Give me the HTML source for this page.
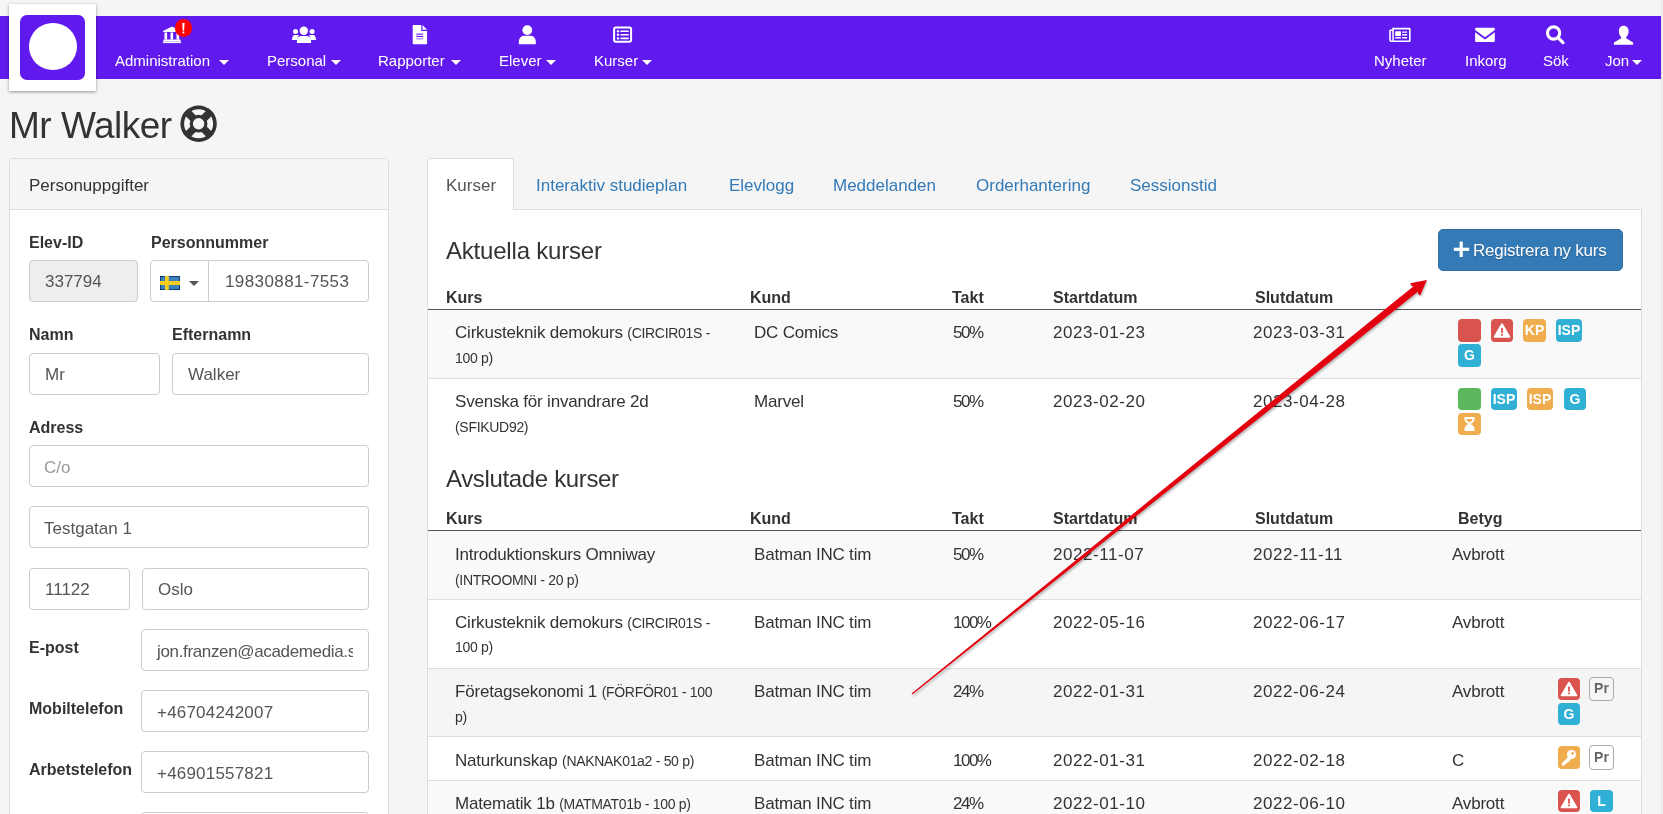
<!DOCTYPE html>
<html><head><meta charset="utf-8">
<style>
html,body{margin:0;padding:0;}
body{width:1663px;height:814px;overflow:hidden;position:relative;background:#f5f5f5;font-family:"Liberation Sans",sans-serif;color:#333;}
.a{position:absolute;}
.t{position:absolute;white-space:nowrap;line-height:1;}
.nl{color:#fff;font-size:15px;top:53px;}
.car{position:absolute;width:0;height:0;border-left:5px solid transparent;border-right:5px solid transparent;border-top:5px solid #fff;top:60px;}
.inp{position:absolute;box-sizing:border-box;height:42px;border:1px solid #ccc;border-radius:4px;background:#fff;}
.lbl{font-weight:bold;font-size:16px;color:#333;}
.it{font-size:17px;color:#555;}
.tab{font-size:17px;color:#337ab7;top:177px;}
.th{font-weight:bold;font-size:16px;color:#333;}
.td{font-size:17px;color:#333;letter-spacing:-0.2px;}
.sm{font-size:14px;letter-spacing:-0.3px;}
.dt{letter-spacing:.55px;}
.pc{letter-spacing:-1.5px;}
.row{position:absolute;left:428px;width:1213px;border-bottom:1px solid #ddd;box-sizing:border-box;}
.st{background:#f9f9f9;}
.bd{position:absolute;height:23px;border-radius:4px;color:#fff;font-weight:bold;font-size:14px;line-height:23px;text-align:center;box-sizing:border-box;}
.r{background:#d9534f;}
.o{background:#f0ad4e;}
.b{background:#31b0d5;}
.g{background:#5cb85c;}
.pr{background:transparent;border:1px solid #aaa;color:#666;line-height:21px;}
</style></head><body><div id="root" style="position:absolute;left:0;top:0;width:1663px;height:814px;will-change:transform;">

<!-- NAVBAR -->
<div class="a" style="left:0;top:16px;width:1661px;height:63px;background:#611aed;"></div>
<div class="a" style="left:1661px;top:0;width:1px;height:814px;background:#e6e6e6;"></div>
<div class="a" style="left:9px;top:4px;width:87px;height:87px;background:#fff;box-shadow:0 1px 3px rgba(0,0,0,.4);"></div>
<div class="a" style="left:20.3px;top:14.5px;width:64.7px;height:65.3px;border-radius:7px;background:#611aed;"></div>
<div class="a" style="left:29px;top:23.3px;width:47.7px;height:46.6px;border-radius:50%;background:#fff;"></div>

<div class="t nl" style="left:115px;">Administration</div><div class="car" style="left:219px;"></div>
<div class="t nl" style="left:267px;">Personal</div><div class="car" style="left:331px;"></div>
<div class="t nl" style="left:378px;">Rapporter</div><div class="car" style="left:451px;"></div>
<div class="t nl" style="left:499px;">Elever</div><div class="car" style="left:546px;"></div>
<div class="t nl" style="left:594px;">Kurser</div><div class="car" style="left:642px;"></div>
<div class="t nl" style="left:1374px;">Nyheter</div>
<div class="t nl" style="left:1465px;">Inkorg</div>
<div class="t nl" style="left:1543px;">Sök</div>
<div class="t nl" style="left:1605px;">Jon</div><div class="car" style="left:1632px;"></div>

<!-- nav icons -->
<svg class="a" style="left:0;top:0" width="1663" height="90" viewBox="0 0 1663 90">
 <g fill="#fff">
  <!-- building -->
  <path d="M163 31 L172 26.6 L181 31 L181 32 L163 32 Z"/>
  <rect x="164.5" y="32.5" width="2.6" height="7"/><rect x="170.5" y="32.5" width="2.6" height="7"/><rect x="176.5" y="32.5" width="2.6" height="7"/>
  <rect x="163.5" y="39.5" width="17" height="1.6"/><rect x="163" y="41.3" width="18" height="1.8"/>
  <!-- people -->
  <circle cx="295.5" cy="31.4" r="2.5"/><circle cx="303.8" cy="30.7" r="4.2"/><circle cx="312.1" cy="31.4" r="2.5"/>
  <path d="M297 43 L311 43 C311.5 39 310 36 307 36 L301 36 C298 36 296.5 39 297 43 Z"/>
  <path d="M292 40 L297.5 40 C297.5 37.5 298 36.5 299 35 L295 35 C293 35 292 37 292 40 Z"/>
  <path d="M316 40 L310.5 40 C310.5 37.5 310 36.5 309 35 L313 35 C315 35 316 37 316 40 Z"/>
  <!-- file -->
  <path d="M413.5 25 L421.3 25 L421.3 31 L427.1 31 L427.1 43.3 Q427.1 44.3 426.1 44.3 L413.7 44.3 Q412.7 44.3 412.7 43.3 L412.7 26 Q412.7 25 413.5 25 Z"/>
  <path d="M422.5 25 L427.1 29.7 L422.5 29.7 Z"/>
  <!-- user -->
  <circle cx="527.3" cy="30.1" r="4.9"/>
  <path d="M518.8 44.3 L535.8 44.3 L535.8 42 C535.8 38.5 533.5 35.8 530.5 35.8 L524.2 35.8 C521 35.8 518.8 38.5 518.8 42 Z"/>
  <!-- newspaper -->
  <path fill-rule="evenodd" d="M1392.2 27.8 L1409.6 27.8 Q1410.6 27.8 1410.6 28.8 L1410.6 41 Q1410.6 42 1409.6 42 L1391 42 Q1389.2 42 1389.2 40.2 L1389.2 30.5 Q1389.2 29.5 1390.2 29.5 L1392.2 29.5 Z M1393.8 29.5 L1393.8 40.4 L1409 40.4 L1409 29.5 Z M1390.8 31 L1390.8 40 Q1390.8 40.4 1391.2 40.4 L1392.3 40.4 L1392.3 31 Z"/>
  <rect x="1395.2" y="31.3" width="5.8" height="4.7" rx=".6"/>
  <rect x="1402" y="31.4" width="5.2" height="1.4" rx=".5"/><rect x="1402" y="34.1" width="5.2" height="1.4" rx=".5"/>
  <rect x="1395.2" y="37" width="5.8" height="1.4" rx=".5"/><rect x="1402" y="37" width="5.2" height="1.4" rx=".5"/>
  <!-- envelope -->
  <path d="M1476.2 27.8 L1493.8 27.8 Q1494.8 27.8 1494.8 28.8 L1494.8 30 L1485 37.2 L1475.1 30 L1475.1 28.8 Q1475.1 27.8 1476.2 27.8 Z"/>
  <path d="M1475.1 32.2 L1485 39.4 L1494.8 32.2 L1494.8 41 Q1494.8 42.1 1493.8 42.1 L1476.1 42.1 Q1475.1 42.1 1475.1 41 Z"/>
  <!-- user2 -->
  <path d="M1623.7 25.8 C1626.6 25.8 1628.6 28 1628.6 31.2 C1628.6 34 1627.6 36 1626.2 37 L1626.2 38.3 L1633.1 42.5 L1633.1 44.8 L1613.9 44.8 L1613.9 42.5 L1621.2 38.3 L1621.2 37 C1619.8 36 1618.9 34 1618.9 31.2 C1618.9 28 1620.8 25.8 1623.7 25.8 Z"/>
 </g>
 <g fill="none" stroke="#fff">
  <!-- list -->
  <rect x="614.1" y="27.6" width="17" height="14.2" rx="1.8" stroke-width="2"/>
  <!-- search -->
  <circle cx="1553.6" cy="33" r="6.1" stroke-width="3.1"/>
  <path d="M1558 37.6 L1563 42.6" stroke-width="3.2" stroke-linecap="round"/>
 </g>
 <g fill="#fff">
  <circle cx="618" cy="31.3" r="1.2"/><circle cx="618" cy="34.8" r="1.2"/><circle cx="618" cy="38.4" r="1.2"/>
  <rect x="620.3" y="30.5" width="8.6" height="1.6" rx=".8"/><rect x="620.3" y="34" width="8.6" height="1.6" rx=".8"/><rect x="620.3" y="37.6" width="8.6" height="1.6" rx=".8"/>
 </g>
 <!-- file lines -->
 <g fill="#611aed"><rect x="416.3" y="33.6" width="6.8" height="1.1"/><rect x="416.3" y="35.9" width="6.8" height="1.1"/><rect x="416.3" y="38.2" width="6.8" height="1.1" opacity=".6"/></g>
 <!-- badge -->
 <rect x="175" y="19" width="17" height="18" rx="8.5" fill="#f00"/>
 <path d="M182.2 23 L184.6 23 L184.1 30.8 L182.7 30.8 Z" fill="#fff"/><rect x="182.5" y="31.6" width="1.8" height="1.8" fill="#fff"/>
</svg>

<!-- TITLE -->
<div class="t" style="left:9px;top:107px;font-size:37px;letter-spacing:-0.5px;color:#333;">Mr Walker</div>
<svg class="a" style="left:178px;top:103px" width="42" height="42" viewBox="0 0 42 42">
 <circle cx="20.6" cy="20.7" r="18.2" fill="#333"/>
 <circle cx="20.6" cy="20.7" r="11.7" fill="none" stroke="#f5f5f5" stroke-width="5.6"/>
 <g stroke="#333" stroke-width="7.5"><line x1="8" y1="8" x2="33.2" y2="33.4"/><line x1="33.2" y1="8" x2="8" y2="33.4"/></g>
 <circle cx="20.6" cy="20.7" r="5.7" fill="#f5f5f5"/>
</svg>

<!-- LEFT PANEL -->
<div class="a" style="left:9px;top:158px;width:380px;height:700px;box-sizing:border-box;border:1px solid #ddd;border-radius:4px;background:#fff;"></div>
<div class="a" style="left:10px;top:159px;width:378px;height:50px;border-bottom:1px solid #ddd;background:#f5f5f5;border-radius:3px 3px 0 0;"></div>
<div class="t" style="left:29px;top:177px;font-size:17px;color:#333;">Personuppgifter</div>

<div class="t lbl" style="left:29px;top:235px;">Elev-ID</div>
<div class="t lbl" style="left:151px;top:235px;">Personnummer</div>
<div class="inp" style="left:29px;top:260px;width:109px;background:#eee;"></div>
<div class="t it" style="left:45px;top:273px;">337794</div>
<div class="inp" style="left:150px;top:260px;width:219px;"></div>
<div class="a" style="left:208px;top:260px;width:1px;height:42px;background:#ccc;"></div>
<svg class="a" style="left:160px;top:276px" width="20" height="14" viewBox="0 0 20 14">
 <rect width="20" height="14" fill="#0a2a6a"/><rect x=".8" y=".8" width="18.4" height="12.4" fill="#3b82b8"/>
 <rect x="5" y="0" width="3.8" height="14" fill="#f7cc1c"/><rect x="0" y="5" width="20" height="4" fill="#f7cc1c"/>
</svg>
<div class="a" style="left:189px;top:281px;width:0;height:0;border-left:5px solid transparent;border-right:5px solid transparent;border-top:5px solid #555;"></div>
<div class="t it" style="left:225px;top:273px;letter-spacing:.4px;">19830881-7553</div>

<div class="t lbl" style="left:29px;top:327px;">Namn</div>
<div class="t lbl" style="left:172px;top:327px;">Efternamn</div>
<div class="inp" style="left:29px;top:353px;width:131px;"></div>
<div class="t it" style="left:45px;top:366px;">Mr</div>
<div class="inp" style="left:172px;top:353px;width:197px;"></div>
<div class="t it" style="left:188px;top:366px;">Walker</div>

<div class="t lbl" style="left:29px;top:420px;">Adress</div>
<div class="inp" style="left:29px;top:445px;width:340px;"></div>
<div class="t it" style="left:44px;top:459px;color:#999;">C/o</div>
<div class="inp" style="left:29px;top:506px;width:340px;"></div>
<div class="t it" style="left:44px;top:520px;">Testgatan 1</div>
<div class="inp" style="left:29px;top:568px;width:101px;"></div>
<div class="t it" style="left:45px;top:581px;">11122</div>
<div class="inp" style="left:142px;top:568px;width:227px;"></div>
<div class="t it" style="left:158px;top:581px;">Oslo</div>

<div class="t lbl" style="left:29px;top:640px;">E-post</div>
<div class="inp" style="left:141px;top:629px;width:228px;"></div><div class="a" style="left:142px;top:630px;width:211px;height:40px;overflow:hidden;"><div class="t it" style="left:15px;top:13px;letter-spacing:-0.35px;">jon.franzen@academedia.se</div></div>
<div class="t lbl" style="left:29px;top:701px;">Mobiltelefon</div>
<div class="inp" style="left:141px;top:690px;width:228px;"></div>
<div class="t it" style="left:157px;top:704px;letter-spacing:.2px;">+46704242007</div>
<div class="t lbl" style="left:29px;top:762px;">Arbetstelefon</div>
<div class="inp" style="left:141px;top:751px;width:228px;"></div>
<div class="t it" style="left:157px;top:765px;letter-spacing:.2px;">+46901557821</div>
<div class="inp" style="left:141px;top:812px;width:228px;"></div>

<!-- TABS -->
<div class="a" style="left:427px;top:209px;width:1215px;height:700px;box-sizing:border-box;border:1px solid #ddd;background:#fff;"></div>
<div class="a" style="left:427px;top:158px;width:87px;height:52px;box-sizing:border-box;border:1px solid #ddd;border-bottom:none;border-radius:4px 4px 0 0;background:#fff;"></div>
<div class="t tab" style="left:446px;color:#555;">Kurser</div>
<div class="t tab" style="left:536px;">Interaktiv studieplan</div>
<div class="t tab" style="left:729px;">Elevlogg</div>
<div class="t tab" style="left:833px;">Meddelanden</div>
<div class="t tab" style="left:976px;">Orderhantering</div>
<div class="t tab" style="left:1130px;">Sessionstid</div>

<div class="t" style="left:446px;top:239px;font-size:24px;letter-spacing:-0.2px;color:#333;">Aktuella kurser</div>
<div class="a" style="left:1438px;top:229px;width:185px;height:42px;box-sizing:border-box;border:1px solid #2e6da4;border-radius:5px;background:#337ab7;"></div>
<svg class="a" style="left:1453px;top:241px" width="17" height="17" viewBox="0 0 17 17"><rect x="6.6" y=".6" width="3.2" height="15.4" fill="#fff"/><rect x=".8" y="6.7" width="15.4" height="3.2" fill="#fff"/></svg>
<div class="t" style="left:1473px;top:242px;font-size:17px;letter-spacing:-0.25px;color:#fff;text-shadow:0 1px 1px rgba(0,0,0,.25);">Registrera ny kurs</div>

<!-- TABLE 1 -->
<div class="t th" style="left:446px;top:290px;">Kurs</div>
<div class="t th" style="left:750px;top:290px;">Kund</div>
<div class="t th" style="left:952px;top:290px;">Takt</div>
<div class="t th" style="left:1053px;top:290px;">Startdatum</div>
<div class="t th" style="left:1255px;top:290px;">Slutdatum</div>
<div class="a" style="left:428px;top:309px;width:1213px;height:1px;background:#555;"></div>

<div class="row st" style="top:310px;height:69px;"></div>
<div class="row" style="top:379px;height:69px;border-bottom:none;"></div>

<div class="t td" style="left:455px;top:324px;">Cirkusteknik demokurs <span class="sm">(CIRCIR01S -</span></div>
<div class="t td sm" style="left:455px;top:351px;">100 p)</div>
<div class="t td" style="left:754px;top:324px;">DC Comics</div>
<div class="t td pc" style="left:953px;top:324px;">50%</div>
<div class="t td dt" style="left:1053px;top:324px;">2023-01-23</div>
<div class="t td dt" style="left:1253px;top:324px;">2023-03-31</div>

<div class="t td" style="left:455px;top:393px;">Svenska för invandrare 2d</div>
<div class="t td sm" style="left:455px;top:420px;">(SFIKUD92)</div>
<div class="t td" style="left:754px;top:393px;">Marvel</div>
<div class="t td pc" style="left:953px;top:393px;">50%</div>
<div class="t td dt" style="left:1053px;top:393px;">2023-02-20</div>
<div class="t td dt" style="left:1253px;top:393px;">2023-04-28</div>

<!-- TABLE 2 -->
<div class="t" style="left:446px;top:467px;font-size:24px;letter-spacing:-0.35px;color:#333;">Avslutade kurser</div>
<div class="t th" style="left:446px;top:511px;">Kurs</div>
<div class="t th" style="left:750px;top:511px;">Kund</div>
<div class="t th" style="left:952px;top:511px;">Takt</div>
<div class="t th" style="left:1053px;top:511px;">Startdatum</div>
<div class="t th" style="left:1255px;top:511px;">Slutdatum</div>
<div class="t th" style="left:1458px;top:511px;">Betyg</div>
<div class="a" style="left:428px;top:530px;width:1213px;height:1px;background:#555;"></div>

<div class="row st" style="top:531px;height:69px;"></div>
<div class="row" style="top:600px;height:69px;"></div>
<div class="row" style="top:669px;height:68px;background:#f5f5f5;"></div>
<div class="row" style="top:737px;height:44px;"></div>
<div class="row st" style="top:781px;height:60px;"></div>

<div class="t td" style="left:455px;top:546px;">Introduktionskurs Omniway</div>
<div class="t td sm" style="left:455px;top:573px;">(INTROOMNI - 20 p)</div>
<div class="t td" style="left:754px;top:546px;">Batman INC tim</div>
<div class="t td pc" style="left:953px;top:546px;">50%</div>
<div class="t td dt" style="left:1053px;top:546px;">2022-11-07</div>
<div class="t td dt" style="left:1253px;top:546px;">2022-11-11</div>
<div class="t td" style="left:1452px;top:546px;">Avbrott</div>

<div class="t td" style="left:455px;top:614px;">Cirkusteknik demokurs <span class="sm">(CIRCIR01S -</span></div>
<div class="t td sm" style="left:455px;top:640px;">100 p)</div>
<div class="t td" style="left:754px;top:614px;">Batman INC tim</div>
<div class="t td pc" style="left:953px;top:614px;">100%</div>
<div class="t td dt" style="left:1053px;top:614px;">2022-05-16</div>
<div class="t td dt" style="left:1253px;top:614px;">2022-06-17</div>
<div class="t td" style="left:1452px;top:614px;">Avbrott</div>

<div class="t td" style="left:455px;top:683px;">Företagsekonomi 1 <span class="sm">(FÖRFÖR01 - 100</span></div>
<div class="t td sm" style="left:455px;top:710px;">p)</div>
<div class="t td" style="left:754px;top:683px;">Batman INC tim</div>
<div class="t td pc" style="left:953px;top:683px;">24%</div>
<div class="t td dt" style="left:1053px;top:683px;">2022-01-31</div>
<div class="t td dt" style="left:1253px;top:683px;">2022-06-24</div>
<div class="t td" style="left:1452px;top:683px;">Avbrott</div>

<div class="t td" style="left:455px;top:752px;">Naturkunskap <span class="sm">(NAKNAK01a2 - 50 p)</span></div>
<div class="t td" style="left:754px;top:752px;">Batman INC tim</div>
<div class="t td pc" style="left:953px;top:752px;">100%</div>
<div class="t td dt" style="left:1053px;top:752px;">2022-01-31</div>
<div class="t td dt" style="left:1253px;top:752px;">2022-02-18</div>
<div class="t td" style="left:1452px;top:752px;">C</div>

<div class="t td" style="left:455px;top:795px;">Matematik 1b <span class="sm">(MATMAT01b - 100 p)</span></div>
<div class="t td" style="left:754px;top:795px;">Batman INC tim</div>
<div class="t td pc" style="left:953px;top:795px;">24%</div>
<div class="t td dt" style="left:1053px;top:795px;">2022-01-10</div>
<div class="t td dt" style="left:1253px;top:795px;">2022-06-10</div>
<div class="t td" style="left:1452px;top:795px;">Avbrott</div>

<!-- BADGES -->
<div class="bd r" style="left:1458px;top:319px;width:23px;"></div>
<div class="bd r" style="left:1491px;top:319px;width:22px;"><svg width="22" height="23" viewBox="0 0 22 23" style="position:absolute;left:0;top:0"><path d="M11 5 L18.5 18 L3.5 18 Z" fill="#fff" stroke="#fff" stroke-width="1.6" stroke-linejoin="round"/><rect x="10.1" y="9" width="1.8" height="5" fill="#d9534f"/><rect x="10.1" y="15" width="1.8" height="1.8" fill="#d9534f"/></svg></div>
<div class="bd o" style="left:1523px;top:319px;width:23px;">KP</div>
<div class="bd b" style="left:1556px;top:319px;width:26px;">ISP</div>
<div class="bd b" style="left:1458px;top:344px;width:23px;">G</div>

<div class="bd g" style="left:1458px;top:388px;width:23px;height:22px;"></div>
<div class="bd b" style="left:1491px;top:388px;width:26px;height:22px;line-height:22px;">ISP</div>
<div class="bd o" style="left:1527px;top:388px;width:26px;height:22px;line-height:22px;">ISP</div>
<div class="bd b" style="left:1564px;top:388px;width:22px;height:22px;line-height:22px;">G</div>
<div class="bd o" style="left:1458px;top:413px;width:23px;height:22px;"><svg width="23" height="22" viewBox="0 0 23 22" style="position:absolute;left:0;top:0"><path d="M6.5 4 L16.5 4 L16.5 6 Q16.5 9 12.5 11 Q16.5 13 16.5 16 L16.5 18 L6.5 18 L6.5 16 Q6.5 13 10.5 11 Q6.5 9 6.5 6 Z" fill="#fff"/><path d="M8.5 6 L14.5 6 Q14.5 8 11.5 9.5 Q8.5 8 8.5 6Z" fill="#f0ad4e"/></svg></div>

<div class="bd r" style="left:1558px;top:678px;width:22px;height:22px;"><svg width="22" height="22" viewBox="0 0 22 22" style="position:absolute;left:0;top:0"><path d="M11 4.5 L18.5 17.5 L3.5 17.5 Z" fill="#fff" stroke="#fff" stroke-width="1.6" stroke-linejoin="round"/><rect x="10.1" y="8.5" width="1.8" height="5" fill="#d9534f"/><rect x="10.1" y="14.5" width="1.8" height="1.8" fill="#d9534f"/></svg></div>
<div class="bd pr" style="left:1589px;top:677px;width:25px;height:24px;">Pr</div>
<div class="bd b" style="left:1558px;top:703px;width:22px;height:22px;line-height:22px;">G</div>
<div class="bd o" style="left:1558px;top:746px;width:22px;height:23px;"><svg width="22" height="23" viewBox="0 0 22 23" style="position:absolute;left:0;top:0"><circle cx="13.5" cy="8.5" r="4.6" fill="#fff"/><circle cx="14.6" cy="7.4" r="1.3" fill="#f0ad4e"/><path d="M11 10 L4 17 L4 19.5 L7 19.5 L7 18 L8.5 18 L8.5 16.5 L10 16.5 L13 13Z" fill="#fff"/></svg></div>
<div class="bd pr" style="left:1589px;top:745px;width:25px;height:25px;line-height:22px;">Pr</div>
<div class="bd r" style="left:1558px;top:790px;width:22px;height:22px;"><svg width="22" height="22" viewBox="0 0 22 22" style="position:absolute;left:0;top:0"><path d="M11 4.5 L18.5 17.5 L3.5 17.5 Z" fill="#fff" stroke="#fff" stroke-width="1.6" stroke-linejoin="round"/><rect x="10.1" y="8.5" width="1.8" height="5" fill="#d9534f"/><rect x="10.1" y="14.5" width="1.8" height="1.8" fill="#d9534f"/></svg></div>
<div class="bd b" style="left:1590px;top:790px;width:23px;height:22px;line-height:22px;">L</div>

<!-- ARROW -->
<svg class="a" style="left:0;top:0" width="1663" height="814" viewBox="0 0 1663 814">
 <defs><filter id="sh" x="-5%" y="-5%" width="110%" height="110%"><feGaussianBlur stdDeviation="0.8"/></filter></defs>
 <path d="M911.6 694.5 L1413.3 287.4 L1411.4 286.6 L1410.2 283.6 L1426.9 280.1 L1420.4 295.8 L1418.6 294.6 L1418.0 292.6 L912.6 695.5 Z" fill="rgba(0,0,0,.28)" filter="url(#sh)" transform="translate(0.8,1)"/>
 <path d="M911.6 693.5 L1413.3 286.4 L1411.4 285.6 L1410.2 283.3 L1426.9 280.1 L1420.2 295.6 L1418.3 294.3 L1417.8 291.8 L912.4 694.5 Z" fill="#e3000f"/>
</svg>
</div></body></html>
